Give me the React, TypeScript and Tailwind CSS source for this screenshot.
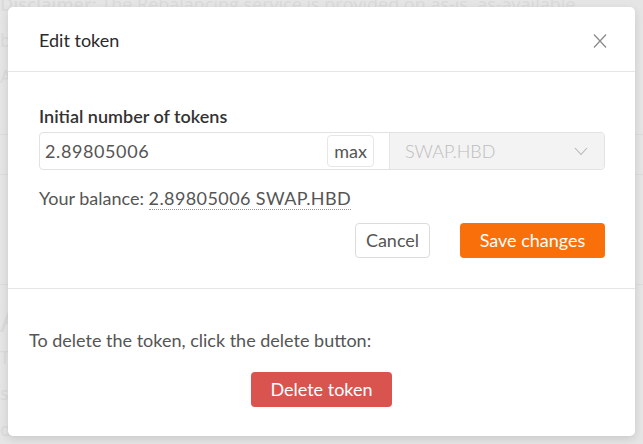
import React from "react";

export default function App() {
  const font = { fontFamily: "Lato, 'Open Sans', sans-serif" };
  return (
    <div className="relative w-[643px] h-[444px] overflow-hidden bg-[#e5e5e5]" style={font}>
      {/* faded page behind overlay */}
      <div className="text-[#dadada] text-[18px] leading-[36px] -mt-[14px]" style={{ fontFamily: "'Open Sans', sans-serif" }}>
        <div className="whitespace-nowrap"><span className="font-semibold">Disclaimer:</span> The Rebalancing service is provided on as-is, as-available</div>
        <div className="whitespace-nowrap">basis and may be discontinued at any time without notice.</div>
        <div className="whitespace-nowrap">Always check the numbers before you submit anything.</div>
        <div className="h-[40px]" />
        <div className="border-t border-[#dcdcdc] h-[40px]" />
        <div className="border-t border-[#dcdcdc] h-[110px]" />
        <div className="border-t border-[#dcdcdc] pt-[14px] text-[34px] leading-[40px]">Add token</div>
        <div className="whitespace-nowrap">The initial number of tokens will be used to</div>
        <div className="whitespace-nowrap">save the rebalancing proportion and calculate the</div>
        <div className="whitespace-nowrap">difference with the current number of tokens in the account.</div>
      </div>

      {/* modal */}
      <div className="absolute left-[8px] top-[7px] w-[627px] h-[429px] bg-white rounded-[5px] shadow-[0_3px_9px_rgba(0,0,0,0.12)] flex flex-col text-[#555]">
        <div className="h-[65px] shrink-0 border-b border-[#e5e5e5] flex items-center justify-between pl-[31px] pr-[27px]">
          <span className="text-[18px] leading-[22px] text-[#2a2a2a] mt-[1px]">Edit token</span>
          <svg width="16" height="16" viewBox="0 0 16 16" className="mt-[3px]">
            <path d="M2 1.5 L14 14.5 M14 1.5 L2 14.5" stroke="#888" strokeWidth="1.2" fill="none" />
          </svg>
        </div>
        <div className="px-[31px] pr-[30px] pt-[34px] h-[217px] shrink-0 border-b border-[#e5e5e5]">
          <div className="text-[18px] font-semibold text-[#333] leading-[20px]">Initial number of tokens</div>
          <div className="mt-[6px] flex h-[38px] border border-[#e2e2e2] rounded-[4px]">
            <div className="flex-1 flex items-center pl-[5px] pr-[15px]">
              <span className="flex-1 text-[18px] tracking-[0.6px] text-[#555]">2.89805006</span>
              <span className="h-[32px] w-[47px] flex items-center justify-center border border-[#e6e6e6] rounded-[4px] text-[18px] text-[#555]">max</span>
            </div>
            <div className="w-[215px] bg-[#f3f3f3] border-l border-[#e6e6e6] rounded-r-[4px] flex items-center justify-between pl-[15px] pr-[16px]">
              <span className="text-[18px] text-[#bdbdbd] font-light">SWAP.HBD</span>
              <svg width="14" height="9" viewBox="0 0 14 9">
                <path d="M1 1 L7 7.5 L13 1" stroke="#b5b5b5" strokeWidth="1.1" fill="none" />
              </svg>
            </div>
          </div>
          <div className="mt-[17px] text-[18px] leading-[22px] text-[#555]">
            Your balance:{" "}
            <span className="border-b border-dotted border-[#999] tracking-[0.4px]">2.89805006 SWAP.HBD</span>
          </div>
          <div className="mt-[14px] flex justify-end gap-[30px]">
            <button className="h-[35px] w-[75px] border border-[#dcdcdc] rounded-[4px] bg-white text-[18px] text-[#555]">Cancel</button>
            <button className="h-[35px] w-[145px] rounded-[4px] bg-[#f9700a] text-[18px] text-white">Save changes</button>
          </div>
        </div>
        <div className="pl-[21px] pt-[40px]">
          <div className="text-[18px] leading-[22px] text-[#555]">To delete the token, click the delete button:</div>
          <div className="mt-[21px] flex justify-center pr-[21px]">
            <button className="h-[35px] w-[141px] rounded-[4px] bg-[#d9534f] text-[18px] text-white">Delete token</button>
          </div>
        </div>
      </div>
    </div>
  );
}
